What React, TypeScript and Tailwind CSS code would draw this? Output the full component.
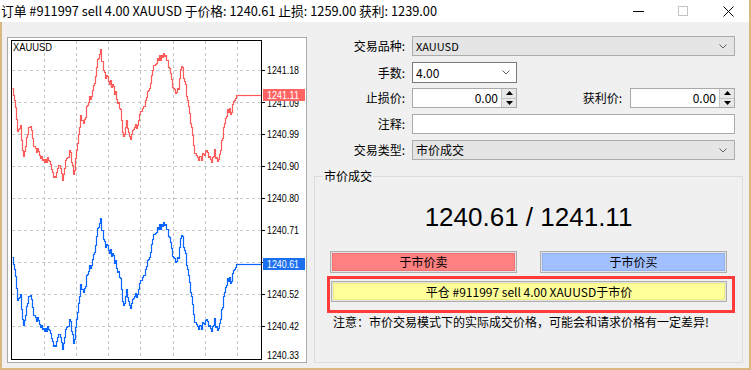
import { useMemo } from "react";

// key points of the bid line in page coordinates, the ask line is the same shape lower down
const KEYS: [number, number][] = [
  [12, 88], [14, 100], [17, 130], [20, 128], [23, 157], [25, 145], [28, 127], [31, 127],
  [33, 145], [36, 150], [40, 156], [43, 162], [47, 160], [50, 166], [55, 180], [58, 163],
  [62, 178], [66, 158], [70, 150], [73, 176], [77, 143], [80, 117], [84, 120], [87, 103],
  [90, 98], [93, 85], [97, 62], [100, 52], [103, 70], [106, 78], [110, 82], [113, 88],
  [117, 100], [120, 112], [123, 137], [126, 120], [130, 142], [133, 127], [137, 126],
  [140, 113], [144, 106], [147, 93], [150, 82], [153, 66], [157, 58], [162, 56], [165, 52],
  [168, 66], [172, 85], [175, 95], [178, 88], [181, 64], [184, 80], [187, 100], [190, 120],
  [194, 153], [197, 158], [202, 156], [206, 148], [210, 162], [214, 152], [217, 163],
  [220, 148], [223, 130], [227, 110], [230, 112], [233, 103], [236, 95],
];

function baseY(x: number) {
  for (let i = 0; i < KEYS.length - 1; i++) {
    const [x0, y0] = KEYS[i];
    const [x1, y1] = KEYS[i + 1];
    if (x <= x1) return y0 + (y1 - y0) * ((x - x0) / (x1 - x0));
  }
  return KEYS[KEYS.length - 1][1];
}

function jitter(x: number) {
  const n = Math.sin(x * 78.233 + 12.9898) * 43758.5453;
  return (n - Math.floor(n) - 0.5) * 7;
}

function stepPath(dy: number) {
  let d = "";
  for (let x = 12; x <= 236; x++) {
    const j = x === 12 || x >= 234 ? 0 : jitter(x);
    const y = Math.round(baseY(x) + j) - 38 + dy + 0.5;
    const sx = x - 8 + 0.5;
    d += x === 12 ? `M${sx} ${y}` : `H${sx}V${y}`;
  }
  return d;
}

const GX = [36, 68, 100, 132, 165, 197, 229];
const GY = [32, 64, 96, 128, 160, 192, 224, 256, 288];
// 1240.61 sits under the blue bid tag, so it is left out here
const LABELS: [number, string][] = [
  [32, "1241.18"],
  [65, "1241.09"],
  [96, "1240.99"],
  [128, "1240.90"],
  [160, "1240.80"],
  [192, "1240.71"],
  [256, "1240.52"],
  [288, "1240.42"],
  [317, "1240.33"],
];

export default function App() {
  return (
    <div className="w-[751px] h-[370px] bg-[#dab981] pr-[2px] pb-[2px] flex flex-col overflow-hidden font-['Noto_Sans_CJK_SC','Noto_Sans',sans-serif] text-black">
      <TitleBar />
      <div className="flex-1 ml-[2px] bg-[#f0f0f0] flex items-start">
        <div className="ml-[5px] mt-[15px] w-[300px] h-[326px] border border-[#a9a9a9] bg-white">
          <Chart />
        </div>
        <OrderForm />
      </div>
    </div>
  );
}

function TitleBar() {
  return (
    <div className="h-[22px] shrink-0 bg-white flex items-center">
      <span className="pl-[1px] text-[12.75px] leading-[22px] whitespace-nowrap">
        订单 #911997 sell 4.00 XAUUSD 于价格: 1240.61 止损: 1259.00 获利: 1239.00
      </span>
      <svg width="11" height="10" className="ml-auto">
        <line x1="0" y1="5.5" x2="11" y2="5.5" stroke="#000" />
      </svg>
      <svg width="10" height="10" className="ml-[34px]">
        <rect x="0.5" y="0.5" width="9" height="9" fill="none" stroke="#c4c4c4" />
      </svg>
      <svg width="11" height="11" className="ml-[35px] mr-[15px]">
        <path d="M0.5 0.5 L10.5 10.5 M10.5 0.5 L0.5 10.5" stroke="#000" />
      </svg>
    </div>
  );
}

function Chart() {
  const red = useMemo(() => stepPath(0), []);
  const blue = useMemo(() => stepPath(169), []);
  return (
    <svg width="298" height="324" className="block">
      {GX.map((x) => (
        <line key={x} x1={x + 0.5} y1={3} x2={x + 0.5} y2={321} stroke="#c6c6c6" strokeDasharray="3 3" />
      ))}
      {GY.map((y) => (
        <line key={y} x1={4} y1={y + 0.5} x2={253} y2={y + 0.5} stroke="#c6c6c6" strokeDasharray="3 3" />
      ))}
      <path d={red} fill="none" stroke="#ff5a5a" strokeWidth={1.2} />
      <path d={blue} fill="none" stroke="#0a66ff" strokeWidth={1.2} />
      <line x1={228} y1={57.5} x2={253} y2={57.5} stroke="#ff5a5a" strokeWidth={1.2} />
      <line x1={228} y1={226.5} x2={253} y2={226.5} stroke="#0a66ff" strokeWidth={1.2} />
      <rect x={3.5} y={2.5} width={250} height={319} fill="none" stroke="#000" />
      {GY.map((y) => (
        <line key={y} x1={254} y1={y + 0.5} x2={257} y2={y + 0.5} stroke="#000" />
      ))}
      {LABELS.map(([y, t]) => (
        <text
          key={t}
          x={259}
          y={y + 4}
          fontFamily="Liberation Sans, sans-serif"
          fontSize={10.5}
          textLength={32}
          lengthAdjust="spacingAndGlyphs"
          fill="#000"
        >
          {t}
        </text>
      ))}
      <rect x={255} y={51} width={42} height={12} fill="#ff6464" />
      <text x={259} y={61} fontFamily="Liberation Sans, sans-serif" fontSize={10.5} textLength={32} lengthAdjust="spacingAndGlyphs" fill="#fff">
        1241.11
      </text>
      <rect x={255} y={220} width={42} height={12} fill="#1a70f0" />
      <text x={259} y={230} fontFamily="Liberation Sans, sans-serif" fontSize={10.5} textLength={32} lengthAdjust="spacingAndGlyphs" fill="#fff">
        1240.61
      </text>
      <text x={5} y={13} fontFamily="Liberation Sans, sans-serif" fontSize={10} textLength={39} lengthAdjust="spacingAndGlyphs" fill="#000">
        XAUUSD
      </text>
    </svg>
  );
}

function Chevron() {
  return (
    <svg width="8" height="5" className="shrink-0">
      <path d="M0.5 0.5 L4 4 L7.5 0.5" fill="none" stroke="#606060" />
    </svg>
  );
}

function SpinField() {
  return (
    <div className="h-[20px] w-[105px] flex border border-[#a9a9a9] bg-white">
      <span className="flex-1 text-right pr-[3px] text-[12px] leading-[18px]">0.00</span>
      <div className="w-[15px] flex flex-col border-l border-[#c4c4c4] bg-[#e8e8e8]">
        <div className="flex-1 flex items-center justify-center border-b border-[#c4c4c4]">
          <svg width="7" height="4">
            <path d="M0 4 L3.5 0 L7 4 Z" fill="#000" />
          </svg>
        </div>
        <div className="flex-1 flex items-center justify-center">
          <svg width="7" height="4">
            <path d="M0 0 L3.5 4 L7 0 Z" fill="#000" />
          </svg>
        </div>
      </div>
    </div>
  );
}

function OrderForm() {
  return (
    <div className="flex flex-col pt-[14px] text-[12px]">
      <div className="flex items-center h-[20px]">
        <span className="w-[98px] text-right leading-[20px]">交易品种:</span>
        <div className="ml-[7px] h-[20px] w-[323px] flex items-center border border-[#acacac] bg-[#e5e5e5] pl-[3px] pr-[7px]">
          <span className="flex-1 text-[11px] leading-[18px]">XAUUSD</span>
          <Chevron />
        </div>
      </div>

      <div className="flex items-center h-[21px] mt-[6px]">
        <span className="w-[98px] text-right leading-[21px]">手数:</span>
        <div className="ml-[7px] h-[21px] w-[105px] flex items-center border border-[#7a7a7a] bg-white pl-[3px] pr-[6px]">
          <span className="flex-1 leading-[19px]">4.00</span>
          <Chevron />
        </div>
      </div>

      <div className="flex items-center h-[20px] mt-[5px]">
        <span className="w-[98px] text-right leading-[20px]">止损价:</span>
        <div className="ml-[7px]">
          <SpinField />
        </div>
        <span className="w-[105px] text-right leading-[20px]">获利价:</span>
        <div className="ml-[8px]">
          <SpinField />
        </div>
      </div>

      <div className="flex items-center h-[20px] mt-[6px]">
        <span className="w-[98px] text-right leading-[20px]">注释:</span>
        <div className="ml-[7px] h-[20px] w-[323px] border border-[#a9a9a9] bg-white" />
      </div>

      <div className="flex items-center h-[20px] mt-[6px]">
        <span className="w-[98px] text-right leading-[20px]">交易类型:</span>
        <div className="ml-[7px] h-[20px] w-[323px] flex items-center border border-[#acacac] bg-[#e5e5e5] pl-[3px] pr-[7px]">
          <span className="flex-1 leading-[18px]">市价成交</span>
          <Chevron />
        </div>
      </div>

      <MarketBox />
    </div>
  );
}

function MarketBox() {
  return (
    <div className="relative ml-[7px] mt-[16px] w-[429px] h-[187px] border border-[#dcdcdc] flex flex-col">
      <span className="absolute -top-[9px] left-[8px] px-[1px] bg-[#f0f0f0] text-[12px] leading-[16px]">
        市价成交
      </span>

      <div className="mt-[25px] text-center text-[26px] leading-[30px] font-['Liberation_Sans',sans-serif]">
        1240.61 / 1241.11
      </div>

      <div className="mt-[19px] px-[15px] flex justify-between">
        <div className="w-[187px] h-[22px] border border-[#adadad] bg-[#e4e4e4] p-px">
          <div className="h-full border border-[#f07070] bg-[#ff8080] flex items-center justify-center leading-[16px]">
            于市价卖
          </div>
        </div>
        <div className="w-[187px] h-[22px] border border-[#adadad] bg-[#e4e4e4] p-px">
          <div className="h-full border border-[#90b0f0] bg-[#a2bfff] flex items-center justify-center leading-[16px]">
            于市价买
          </div>
        </div>
      </div>

      <div className="mt-[3px] ml-[12px] w-[408px] h-[37px] border-[3px] border-[#ff3a3a] pl-px pt-[2px]">
        <div className="w-[396px] h-[21px] border border-[#adadad] bg-[#e4e4e4] p-px">
          <div className="h-full border border-[#eeee80] bg-[#ffff99] flex items-center justify-center leading-[16px] whitespace-nowrap">
            平仓 #911997 sell 4.00 XAUUSD于市价
          </div>
        </div>
      </div>

      <div className="mt-px ml-[18px] text-[12px] leading-[16px] whitespace-nowrap">
        注意：市价交易模式下的实际成交价格，可能会和请求价格有一定差异!
      </div>
    </div>
  );
}
